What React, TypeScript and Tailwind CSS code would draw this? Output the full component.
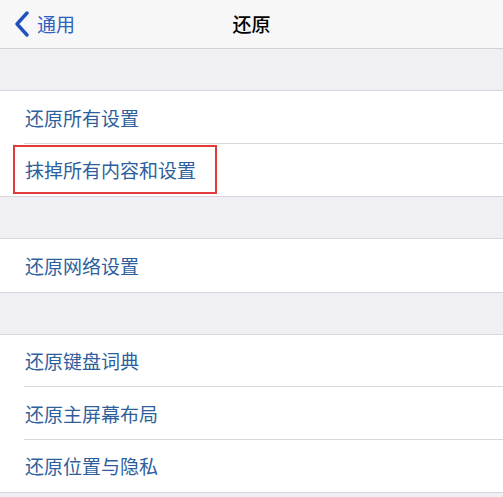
const font = "font-['Noto_Sans_CJK_SC',sans-serif]";

function Gap() {
  return <div className="h-[42px] bg-[#efeff4] border-b border-[#d6d6da]" />;
}

function Row({ label, last, boxed }: { label: string; last?: boolean; boxed?: boolean }) {
  return (
    <div className="relative h-[52.5px] bg-white">
      <div className="flex h-full items-center pl-[25px]">
        <span className="text-[19px] leading-none text-[#2e5f9c]">{label}</span>
      </div>
      {!last && <div className="absolute bottom-0 left-[24px] right-0 h-px bg-[#d9d9dd]" />}
      {boxed && (
        <div className="absolute left-[13px] top-[1px] h-[49px] w-[204px] border-2 border-[#e23a3a]" />
      )}
    </div>
  );
}

export default function App() {
  return (
    <div className={`w-[503px] h-[497px] overflow-hidden bg-[#efeff4] ${font}`}>
      <div className="relative flex h-[49px] items-center bg-[#f7f7f8] border-b border-[#d2d2d6]">
        <div className="flex items-center pl-[14px]">
          <svg width="16" height="26" viewBox="0 0 16 26" className="mr-[7px]">
            <path d="M13 2 L3 13 L13 24" fill="none" stroke="#1f52c0" strokeWidth="3.4" strokeLinecap="round" strokeLinejoin="round" />
          </svg>
          <span className="text-[19px] text-[#2b60c2]">通用</span>
        </div>
        <div className="absolute inset-x-0 text-center text-[19px] font-medium text-black pointer-events-none">还原</div>
      </div>
      <Gap />
      <Row label="还原所有设置" />
      <Row label="抹掉所有内容和设置" last boxed />
      <div className="border-t border-[#d6d6da]" />
      <Gap />
      <Row label="还原网络设置" last />
      <div className="border-t border-[#d6d6da]" />
      <Gap />
      <Row label="还原键盘词典" />
      <Row label="还原主屏幕布局" />
      <Row label="还原位置与隐私" last />
      <div className="border-t border-[#d6d6da]" />
    </div>
  );
}
